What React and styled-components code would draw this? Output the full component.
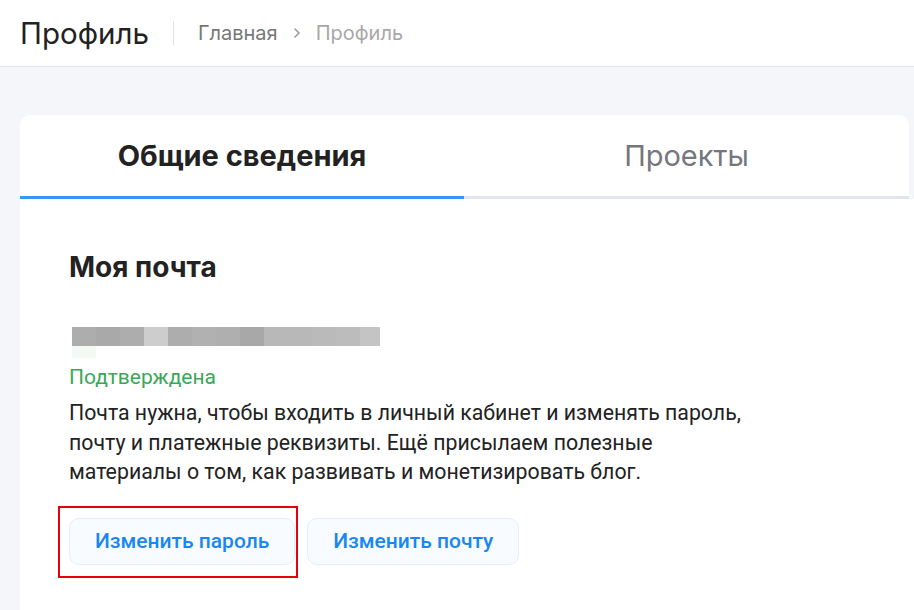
import React from "react";
import styled, { createGlobalStyle } from "styled-components";

const Global = createGlobalStyle`
  html, body { margin: 0; padding: 0; background: #f5f6fa; }
  body { font-family: Roboto, "Noto Sans", sans-serif; color: #222; }
  * { box-sizing: border-box; }
`;

const Page = styled.div`
  width: 914px;
  height: 610px;
  overflow: hidden;
  position: relative;
  background: #f5f6fa;
  display: flex;
  flex-direction: column;
`;

const Header = styled.header`
  height: 67px;
  flex: none;
  background: #fff;
  border-bottom: 1px solid #e3e5ee;
  display: flex;
  align-items: center;
  padding: 0 0 0 20px;
`;

const Title = styled.h1`
  margin: 0;
  font-family: Inter, sans-serif;
  font-weight: 400;
  font-size: 29.5px;
  color: #222;
`;

const Divider = styled.span`
  width: 1px;
  height: 24px;
  background: #e2e2e2;
  margin: 0 24px 0 24px;
`;

const Crumbs = styled.nav`
  display: flex;
  align-items: center;
  gap: 14px;
  font-family: Inter, sans-serif;
  font-size: 20px;
`;

const Crumb = styled.span`
  color: ${(p) => (p.$current ? "#a8a8a8" : "#777")};
`;

const Main = styled.main`
  flex: 1;
  padding: 48px 0 0 20px;
  display: flex;
  flex-direction: column;
`;

const Tabs = styled.div`
  margin-right: 5px;
  background: #fff;
  border-radius: 10px 10px 0 0;
  display: grid;
  grid-template-columns: 444px 1fr;
  height: 84px;
`;

const Tab = styled.div`
  display: flex;
  align-items: center;
  justify-content: center;
  font-family: Inter, sans-serif;
  font-size: 29px;
  font-weight: ${(p) => (p.$active ? 700 : 400)};
  color: ${(p) => (p.$active ? "#222" : "#75767e")};
  border-bottom: 3px solid ${(p) => (p.$active ? "#3a96f6" : "#e1e4ea")};
`;

const Content = styled.section`
  flex: 1;
  background: #fff;
  padding: 50px 0 0 49px;
  display: flex;
  flex-direction: column;
  align-items: flex-start;
`;

const SectionTitle = styled.h2`
  margin: 0;
  font-family: Inter, sans-serif;
  font-size: 28px;
  font-weight: 700;
  color: #222;
  line-height: 36px;
`;

const Masked = styled.div`
  margin: 42px 0 0 3px;
  display: flex;
  flex-direction: column;
`;

const PixelRow = styled.div`
  display: flex;
  height: ${(p) => p.$h}px;
`;

const Pixel = styled.span`
  display: block;
  width: ${(p) => p.$w || 24}px;
  height: 100%;
  background: ${(p) => p.$c};
`;

const Status = styled.div`
  margin-top: 5px;
  font-size: 21px;
  color: #3aa757;
  line-height: 28px;
`;

const Text = styled.p`
  margin: 7px 0 0;
  font-size: 21.3px;
  line-height: 29.5px;
  color: #222;
  width: 684px;
`;

const Buttons = styled.div`
  margin-top: 31px;
  display: flex;
  gap: 12px;
`;

const Button = styled.button`
  height: 47px;
  padding: 0 25px;
  border-radius: 10px;
  border: 1px solid #e2eefb;
  background: #f8fbff;
  color: #1a87f0;
  font-family: Roboto, sans-serif;
  font-size: 21px;
  font-weight: 500;
  cursor: pointer;
`;

const Highlight = styled.div`
  position: absolute;
  left: 58px;
  top: 506px;
  width: 240px;
  height: 72px;
  border: 2px solid #e8000b;
  pointer-events: none;
`;

const pixels = [
  ["#adadad", 24],
  ["#a9a9a9", 24],
  ["#adadad", 24],
  ["#cdcdcd", 24],
  ["#adadad", 24],
  ["#b1b1b1", 24],
  ["#afafaf", 24],
  ["#a8a8a8", 24],
  ["#b8b8b8", 24],
  ["#b8b8b8", 24],
  ["#bababa", 24],
  ["#bcbcbc", 24],
  ["#c4c4c4", 20],
];

export default function App() {
  return (
    <Page>
      <Global />
      <Header>
        <Title>Профиль</Title>
        <Divider />
        <Crumbs>
          <Crumb>Главная</Crumb>
          <svg width="10" height="12" viewBox="0 0 10 12" fill="none">
            <path d="M3 2l4 4-4 4" stroke="#9a9a9a" strokeWidth="1.6" strokeLinecap="round" strokeLinejoin="round" />
          </svg>
          <Crumb $current>Профиль</Crumb>
        </Crumbs>
      </Header>
      <Main>
        <Tabs>
          <Tab $active>Общие сведения</Tab>
          <Tab>Проекты</Tab>
        </Tabs>
        <Content>
          <SectionTitle>Моя почта</SectionTitle>
          <Masked>
            <PixelRow $h={19}>
              {pixels.map(([c, w], i) => (
                <Pixel key={i} $c={c} $w={w} />
              ))}
            </PixelRow>
            <PixelRow $h={12}>
              <Pixel $c="#f4f9f5" $w={24} />
            </PixelRow>
          </Masked>
          <Status>Подтверждена</Status>
          <Text>
            Почта нужна, чтобы входить в личный кабинет и изменять пароль,
            почту и платежные реквизиты. Ещё присылаем полезные материалы о
            том, как развивать и монетизировать блог.
          </Text>
          <Buttons>
            <Button>Изменить пароль</Button>
            <Button>Изменить почту</Button>
          </Buttons>
        </Content>
      </Main>
      <Highlight />
    </Page>
  );
}
